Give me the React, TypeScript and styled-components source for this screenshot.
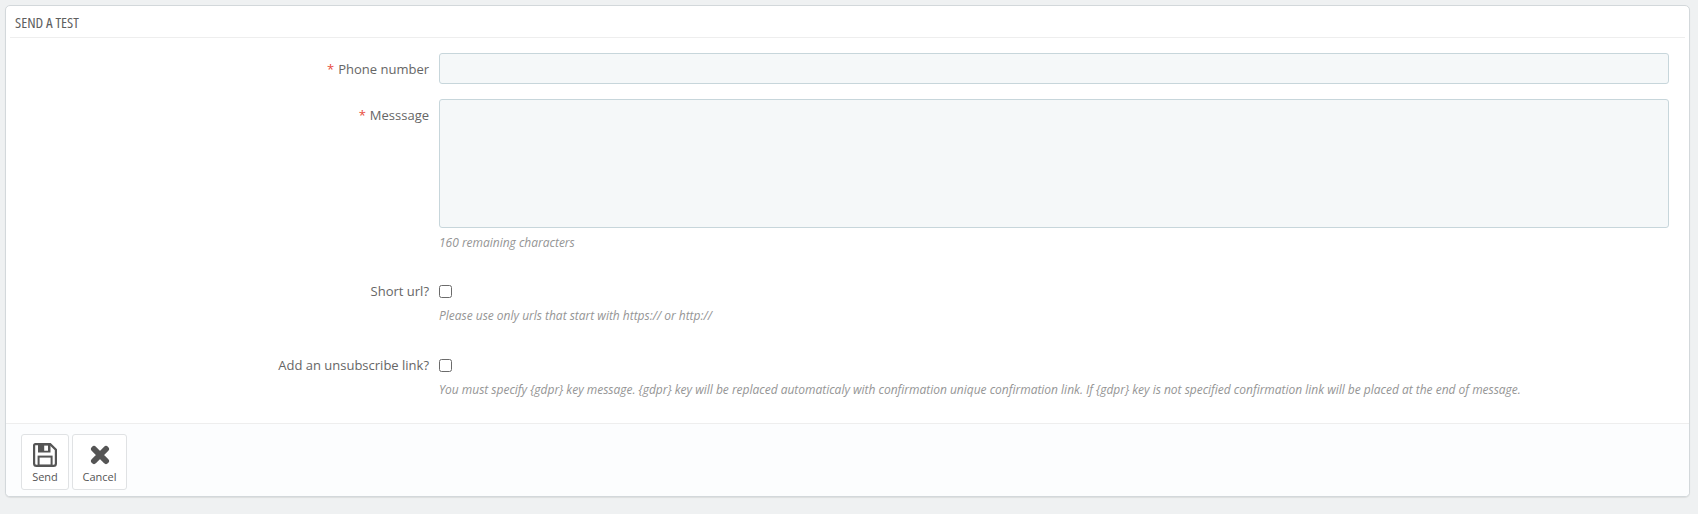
import styled, { createGlobalStyle } from 'styled-components';

const GlobalStyle = createGlobalStyle`
  html, body {
    margin: 0;
    padding: 0;
    background: #eff1f2;
    font-family: "Open Sans", "Liberation Sans", sans-serif;
    font-size: 12px;
    color: #555;
  }
`;

const Page = styled.div`
  padding: 5px 8px 0 5px;
  height: 509px;
`;

const Panel = styled.form`
  background: #fff;
  border: 1px solid #d3d8db;
  border-radius: 5px;
  box-shadow: 0 1px 1px rgba(0, 0, 0, 0.08);
  height: 492px;
  box-sizing: border-box;
  display: flex;
  flex-direction: column;
  overflow: hidden;
`;

const PanelHeading = styled.div`
  height: 32px;
  box-sizing: border-box;
  margin: 0 4px;
  padding-left: 5px;
  border-bottom: 1px solid #eeeeee;
  display: flex;
  align-items: center;
  font-size: 15px;
  font-stretch: condensed;
  color: #5f5f5f;
  text-transform: uppercase;
  white-space: nowrap;
`;

const Fields = styled.div`
  flex: 1;
  padding-top: 15px;
`;

const Row = styled.div<{ $bottom: number }>`
  display: grid;
  grid-template-columns: 423px 1230px;
  column-gap: 10px;
  margin-bottom: ${(p) => p.$bottom}px;
`;

const Label = styled.label<{ $top: number }>`
  text-align: right;
  font-size: 13px;
  line-height: 15px;
  color: #666;
  padding-top: ${(p) => p.$top}px;
`;

const Required = styled.span`
  color: #e84c3d;
  margin-right: 4px;
`;

const TextInput = styled.input`
  display: block;
  width: 100%;
  height: 31px;
  box-sizing: border-box;
  background: #f5f8f9;
  border: 1px solid #c7d6db;
  border-radius: 3px;
  outline: none;
`;

const TextArea = styled.textarea`
  display: block;
  width: 100%;
  height: 129px;
  box-sizing: border-box;
  background: #f5f8f9;
  border: 1px solid #c7d6db;
  border-radius: 3px;
  outline: none;
  resize: none;
`;

const Check = styled.span`
  display: block;
  width: 13px;
  height: 13px;
  box-sizing: border-box;
  margin-top: 1px;
  background: #fff;
  border: 1px solid #6b6b6b;
  border-radius: 2.5px;
`;

const Help = styled.p<{ $top: number }>`
  margin: ${(p) => p.$top}px 0 0;
  font-size: 12px;
  line-height: 16px;
  font-style: italic;
  letter-spacing: -0.015px;
  color: #959595;
  white-space: nowrap;
`;

const Footer = styled.div`
  height: 73px;
  box-sizing: border-box;
  border-top: 1px solid #eeeeee;
  background: #fcfdfe;
  padding: 10px 15px;
  display: flex;
  gap: 3px;
`;

const ActionButton = styled.button<{ $width: number }>`
  width: ${(p) => p.$width}px;
  height: 56px;
  box-sizing: border-box;
  padding: 0;
  background: #fff;
  border: 1px solid #e0e2e4;
  border-radius: 3px;
  color: #555;
  font-family: "Open Sans", "Liberation Sans", sans-serif;
  font-size: 11px;
  line-height: 14px;
  display: flex;
  flex-direction: column;
  align-items: center;
  justify-content: flex-start;
`;

const IconSlot = styled.span`
  height: 27px;
  margin-top: 6px;
  margin-bottom: 2px;
  display: flex;
  align-items: center;
  justify-content: center;
`;

const SaveIcon = () => (
  <svg width="24" height="24" viewBox="0 0 24 24">
    <path
      d="M2.5 1.1H17.2L22.9 6.8V20.5A2.4 2.4 0 0 1 20.5 22.9H3.5A2.4 2.4 0 0 1 1.1 20.5V2.5A1.4 1.4 0 0 1 2.5 1.1Z"
      fill="none"
      stroke="#555"
      strokeWidth="2.2"
    />
    <path d="M5 1H17.5V9.6H5ZM11.2 2.6V7.8H15V2.6Z" fill="#555" fillRule="evenodd" />
    <rect x="5.6" y="13.6" width="13" height="9" fill="none" stroke="#555" strokeWidth="2" />
  </svg>
);

const CancelIcon = () => (
  <svg width="20" height="20" viewBox="0 0 20 20">
    <path d="M4 4L16 16M16 4L4 16" fill="none" stroke="#555" strokeWidth="6" strokeLinecap="round" />
  </svg>
);

export default function App() {
  return (
    <Page>
      <GlobalStyle />
      <Panel onSubmit={(e) => e.preventDefault()}>
        <PanelHeading>Send a test</PanelHeading>
        <Fields>
          <Row $bottom={15}>
            <Label $top={9}>
              <Required>*</Required>Phone number
            </Label>
            <TextInput type="text" />
          </Row>
          <Row $bottom={33}>
            <Label $top={9}>
              <Required>*</Required>Messsage
            </Label>
            <div>
              <TextArea />
              <Help $top={7}>160 remaining characters</Help>
            </div>
          </Row>
          <Row $bottom={34}>
            <Label $top={0}>Short url?</Label>
            <div>
              <Check />
              <Help $top={10}>Please use only urls that start with https:// or http://</Help>
            </div>
          </Row>
          <Row $bottom={0}>
            <Label $top={0}>Add an unsubscribe link?</Label>
            <div>
              <Check />
              <Help $top={10}>
                You must specify {'{gdpr}'} key message. {'{gdpr}'} key will be replaced automaticaly with
                confirmation unique confirmation link. If {'{gdpr}'} key is not specified confirmation link
                will be placed at the end of message.
              </Help>
            </div>
          </Row>
        </Fields>
        <Footer>
          <ActionButton type="submit" $width={48}>
            <IconSlot>
              <SaveIcon />
            </IconSlot>
            Send
          </ActionButton>
          <ActionButton type="button" $width={55}>
            <IconSlot>
              <CancelIcon />
            </IconSlot>
            Cancel
          </ActionButton>
        </Footer>
      </Panel>
    </Page>
  );
}
